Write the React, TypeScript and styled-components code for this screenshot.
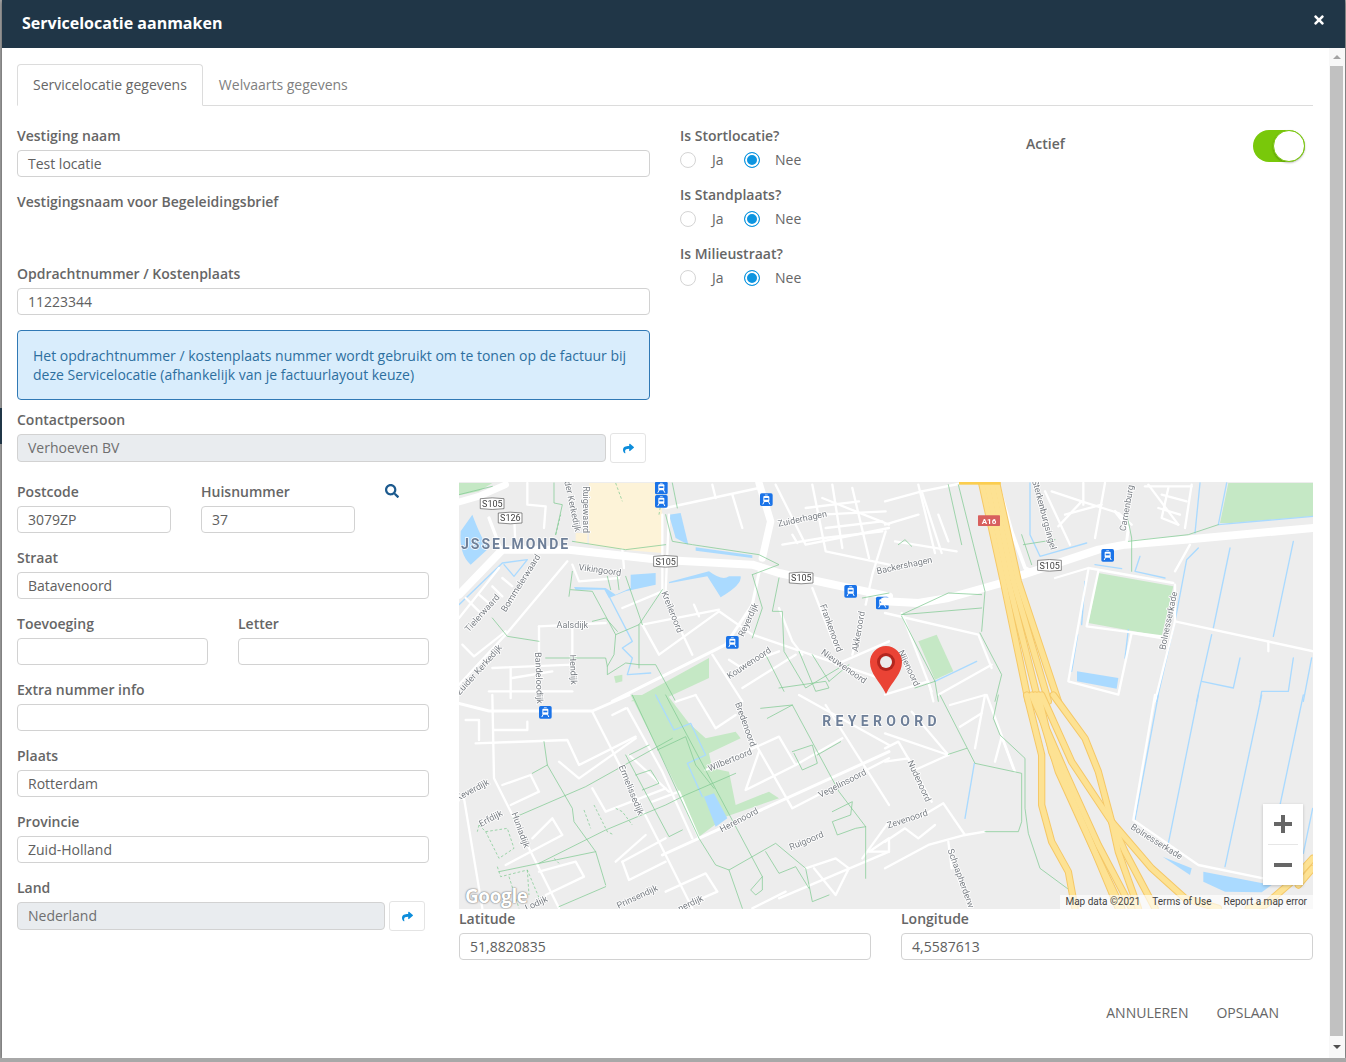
import React from "react";
import styled, { createGlobalStyle } from "styled-components";
import { FaTimes, FaShare, FaSearch } from "react-icons/fa";

const GlobalStyle = createGlobalStyle`
  html, body { margin: 0; padding: 0; background: #a8a8a8; overflow: hidden; }
  body { font-family: "Open Sans", "Liberation Sans", sans-serif; font-size: 14px; color: #666; }
  * { box-sizing: border-box; }
`;

const SideMark = styled.div`
  position: absolute;
  left: 0;
  top: 408px;
  width: 2px;
  height: 36px;
  background: #203647;
`;
const Modal = styled.div`
  width: 1343px;
  height: 1058px;
  margin-left: 2px;
  background: #fff;
  box-shadow: 0 1px 4px rgba(0, 0, 0, 0.55);
  display: flex;
  flex-direction: column;
`;
const Header = styled.div`
  height: 48px;
  flex: none;
  background: #203647;
  color: #fff;
  display: flex;
  align-items: flex-start;
  justify-content: space-between;
  padding: 12px 19px 0 20px;
`;
const Title = styled.div`
  font-size: 16px;
  font-weight: 700;
  line-height: 22px;
`;
const CloseBtn = styled.div`
  display: flex;
  margin-top: 1px;
  font-size: 14px;
  color: #fff;
`;
const Body = styled.div`
  flex: 1;
  display: flex;
  min-height: 0;
`;
const Content = styled.div`
  flex: 1;
  padding: 16px 16px 0 15px;
`;
const Scrollbar = styled.div`
  width: 16px;
  flex: none;
  padding-left: 1px;
  background: #f8f8f8;
  display: flex;
  flex-direction: column;
  align-items: flex-start;
`;
const ScrollArrow = styled.div<{ $down?: boolean }>`
  height: ${(p) => (p.$down ? 22 : 18)}px;
  width: 13px;
  flex: none;
  display: flex;
  align-items: center;
  justify-content: center;
  &::after {
    content: "";
    border-left: 4px solid transparent;
    border-right: 4px solid transparent;
    ${(p) => (p.$down ? "border-top: 4px solid #505050;" : "border-bottom: 4px solid #a3a3a3;")}
  }
`;
const ScrollThumb = styled.div`
  flex: 1;
  width: 13px;
  background: #c1c1c1;
`;

const TabList = styled.div`
  display: flex;
  height: 42px;
  border-bottom: 1px solid #dcdcdc;
  margin-bottom: 20px;
`;
const Tab = styled.div<{ $active?: boolean }>`
  height: 42px;
  padding: 0 15px;
  line-height: 39px;
  font-size: 14px;
  border: 1px solid ${(p) => (p.$active ? "#dcdcdc" : "transparent")};
  border-bottom: 1px solid ${(p) => (p.$active ? "#fff" : "transparent")};
  border-radius: 4px 4px 0 0;
  color: ${(p) => (p.$active ? "#666" : "#808080")};
  background: ${(p) => (p.$active ? "#fff" : "transparent")};
`;

const TopRow = styled.div`
  display: grid;
  grid-template-columns: 633px 376px 1fr;
`;
const LeftCol = styled.div`
  width: 633px;
`;
const Label = styled.div`
  font-size: 14px;
  font-weight: 600;
  line-height: 19px;
  margin-bottom: 5px;
  color: #666;
  white-space: nowrap;
`;
const Field = styled.div`
  margin-bottom: 15px;
  min-width: 0;
`;
const TextBox = styled.div<{ $disabled?: boolean }>`
  height: ${(p) => (p.$disabled ? 28 : 27)}px;
  line-height: 26px;
  padding: 0 10px;
  border: 1px solid #d2d2d2;
  border-radius: 4px;
  font-size: 14px;
  color: ${(p) => (p.$disabled ? "#6f6f6f" : "#606060")};
  background: ${(p) => (p.$disabled ? "#e9ecef" : "#fff")};
`;
const Spacer = styled.div`
  height: 48px;
`;
const Alert = styled.div`
  height: 70px;
  padding: 15px;
  border: 1px solid #3079b5;
  border-radius: 4px;
  background: #d9edfc;
  color: #2d6f9f;
  font-size: 14px;
  line-height: 19px;
  margin-bottom: 10px;
`;
const InputWithBtn = styled.div`
  display: flex;
  gap: 4px;
  align-items: center;
  height: 28px;
`;
const Grow = styled.div`
  flex: 1;
`;
const ShareBtn = styled.div`
  width: 36px;
  height: 30px;
  margin-right: 4px;
  flex: none;
  border: 1px solid #e4e4e4;
  border-radius: 3px;
  display: flex;
  align-items: center;
  justify-content: center;
  background: #fff;
  color: #0d8ddb;
  font-size: 11px;
`;

const RadioCol = styled.div`
  padding-left: 30px;
`;
const RadioGroup = styled.div`
  margin-bottom: 15px;
`;
const RadioRow = styled.div`
  display: flex;
  height: 20px;
  align-items: center;
`;
const RadioItem = styled.div<{ $w: number }>`
  width: ${(p) => p.$w}px;
  display: flex;
  align-items: center;
  line-height: 20px;
  color: #666;
`;
const RadioDot = styled.span<{ $on?: boolean }>`
  width: 16px;
  height: 16px;
  flex: none;
  border-radius: 50%;
  background: ${(p) => (p.$on ? "#0d95e0" : "#fff")};
  border: 1px solid ${(p) => (p.$on ? "#0d95e0" : "#d4d4d4")};
  box-shadow: ${(p) => (p.$on ? "inset 0 0 0 2px #fff" : "none")};
  margin-right: ${(p) => (p.$on ? 15 : 16)}px;
`;
const ActiveCol = styled.div`
  display: flex;
  justify-content: space-between;
  align-items: flex-start;
  padding: 4px 8px 0 0;
`;
const ActiveLabel = styled.div`
  font-size: 14px;
  font-weight: 600;
  line-height: 20px;
  margin-top: 4px;
  color: #666;
`;
const Toggle = styled.div`
  width: 52px;
  height: 32px;
  border-radius: 16px;
  background: #79c80a;
  display: flex;
  justify-content: flex-end;
`;
const ToggleKnob = styled.div`
  width: 32px;
  height: 32px;
  border-radius: 50%;
  background: #fff;
  border: 1px solid #79c80a;
  box-shadow: 0 1px 2px rgba(0, 0, 0, 0.25);
`;

const LowerRow = styled.div`
  display: grid;
  grid-template-columns: 412px 854px;
  column-gap: 30px;
  margin-top: 20px;
`;
const Cols = styled.div<{ $cols: string }>`
  display: grid;
  grid-template-columns: ${(p) => p.$cols};
  column-gap: 30px;
`;
const SearchIcon = styled.div`
  display: flex;
  color: #1c5a8e;
  font-size: 14px;
  margin-top: 2px;
`;
const MapBox = styled.div`
  position: relative;
  height: 427px;
  overflow: hidden;
  background: #ededed;
`;
const MapSvg = styled.svg`
  display: block;
  filter: blur(0.35px);
`;
const ZoomCtl = styled.div`
  position: absolute;
  right: 10px;
  top: 322px;
  width: 40px;
  height: 81px;
  background: #fff;
  box-shadow: 0 1px 3px rgba(0, 0, 0, 0.2);
  display: flex;
  flex-direction: column;
  align-items: center;
`;
const ZoomBtn = styled.div`
  height: 40px;
  width: 100%;
  display: flex;
  align-items: center;
  justify-content: center;
`;
const ZoomSep = styled.div`
  width: 30px;
  height: 1px;
  background: #e6e6e6;
`;
const Attribution = styled.div`
  position: absolute;
  right: 0;
  bottom: 0;
  height: 14px;
  display: flex;
  gap: 12px;
  padding: 0 6px 0 5px;
  background: rgba(255, 255, 255, 0.65);
  font-family: Roboto, "Liberation Sans", sans-serif;
  font-size: 10px;
  line-height: 14px;
  color: #444;
  white-space: nowrap;
`;
const GoogleMark = styled.div`
  position: absolute;
  left: 6px;
  bottom: 2px;
  font-family: "Open Sans", "Liberation Sans", sans-serif;
  font-size: 19px;
  font-weight: 700;
  line-height: 22px;
  letter-spacing: -0.4px;
  color: #fff;
  text-shadow: 0 0 2px #777, 0 0 1px #777;
`;
const Footer = styled.div`
  display: flex;
  justify-content: flex-end;
  gap: 28px;
  padding-right: 34px;
  margin-top: 28px;
`;
const TextBtn = styled.div`
  font-size: 14px;
  line-height: 20px;
  color: #666;
  text-transform: uppercase;
`;

type Label3 = [string, number, number, number];
type Quad = {
  dx: number;
  dy: number;
  parks?: string[];
  beige?: string[];
  waterFill?: string[];
  water?: string[];
  green?: string[];
  dashed?: string[];
  wide?: [string, number][];
  roads?: string[];
  highway?: string[];
  labels?: Label3[];
  shields?: [string, number, number][];
  transit?: [number, number][];
};

// path data is in zoomed-in (3x) map pixels, one block per map quarter
const quads: Quad[] = [
  {
    dx: 0,
    dy: -0.67,
    parks: ["M0,5 L100,5 L60,30 L0,42Z", "M515,660 L750,530 L750,590 L600,660Z", "M465,585 L490,580 L490,600 L470,605Z"],
    beige: ["M390,5 L600,5 L610,100 L610,215 L490,205 L390,190Z", "M350,155 L385,155 L385,185 L350,185Z"],
    waterFill: [
      "M40,100 Q70,180 90,200 L35,250 Q0,220 5,150Z",
      "M630,100 L665,95 L688,190 L650,170Z",
      "M710,198 L880,222 L880,230 L710,208Z",
      "M515,280 L590,275 L590,310 L500,330 L450,350 L436,325 L350,325 L345,317 L440,320 L470,340 L515,320Z",
      "M630,302 L750,270 Q790,300 810,285 L845,285 Q850,310 785,348 L745,285 L630,306Z",
    ],
    water: ["M445,335 L520,480 L490,500 L520,530 L505,580 L575,575", "M0,370 L130,245 L205,235 L165,285 L135,250"],
    green: [
      "M285,5 L285,65 L310,70 L290,160",
      "M0,40 L100,15",
      "M340,180 L500,205 L620,190",
      "M640,5 L655,80",
      "M620,100 L640,180 L700,190 L900,220 L960,250 L880,280",
      "M340,270 L330,345",
      "M335,325 L400,330 L470,460 L540,430 L610,325",
      "M445,285 L455,325",
      "M475,285 L480,325",
      "M500,285 L550,430",
      "M470,460 L465,520 L445,555 L445,580 L500,545 L540,550 L590,550 L650,660",
      "M400,420 L440,410 L475,450",
      "M540,430 L540,560",
      "M100,410 L145,465 L240,480",
      "M880,280 L910,380 L880,470",
      "M960,290 L940,390 L970,390 L975,510 L1040,620 L1140,560",
      "M1020,510 L1070,630 L1110,620 L1100,600 L960,620",
      "M920,520 L975,630",
      "M1110,600 L1170,550",
      "M1060,520 L1110,600",
      "M1210,350 L1290,335",
      "M260,530 L440,530 L445,555",
    ],
    dashed: ["M290,160 L305,100", "M470,5 L490,60", "M600,100 L610,40"],
    roads: [
      "M205,5 L205,70 L260,75 L255,140",
      "M165,100 L170,200",
      "M325,240 L140,460 L0,610",
      "M0,410 L120,260",
      "M20,350 L60,390",
      "M60,340 L95,370",
      "M100,315 L130,345",
      "M130,290 L160,315",
      "M10,490 L45,525 L140,450",
      "M490,205 L495,260",
      "M610,100 L610,330",
      "M630,100 L620,330",
      "M490,380 L610,330",
      "M610,330 L700,520",
      "M550,430 L600,520 L780,390 L880,460 L1290,600",
      "M550,430 L780,385",
      "M705,370 L720,405",
      "M240,435 L440,425",
      "M240,435 L240,650",
      "M340,440 L340,600",
      "M100,560 L340,550",
      "M155,560 L155,650",
      "M160,590 L280,570",
      "M90,630 L340,630",
      "M760,520 L850,660",
      "M810,535 L840,555 L960,510",
      "M850,620 L1010,520",
      "M960,380 L1000,480 L1030,520",
      "M1060,320 L1130,500",
      "M1210,400 L1180,520",
      "M950,10 L1000,110 L1040,190 L1290,140",
      "M1060,10 L1100,210 L1290,250",
      "M1120,10 L1150,200",
      "M1280,150 L1240,280 L1220,370",
      "M970,190 L1090,170",
      "M620,80 L900,20",
      "M760,10 L770,50",
      "M820,40 L850,140",
      "M340,250 L360,300 L480,290",
      "M1090,50 L1290,130",
      "M1040,80 L1200,60",
      "M1100,140 L1270,120",
      "M1180,20 L1230,230",
      "M1095,170 L1270,150",
      "M1000,160 L1015,185",
      "M1085,100 L1280,90",
      "M1130,550 L1290,480",
      "M1280,380 L1290,350",
    ],
    wide: [
      ["M0,340 L130,205 L330,205 L600,235 L880,250 L960,275 L1290,345", 24],
      ["M0,62 L60,45 L140,10", 20],
      ["M900,5 L935,120 L910,230", 22],
      ["M130,215 L90,110", 10],
      ["M905,250 L880,370 L800,490 L460,660", 9],
    ],
    labels: [
      ["rder Kerkedijk", 340, 70, 78],
      ["Ruigewaard", 382, 85, 90],
      ["Zuiderhagen", 1030, 112, -12],
      ["Vikingoord", 423, 266, 8],
      ["Kreileroord", 640, 392, 68],
      ["Reyerdijk", 868, 415, -65],
      ["Frankenoord", 1117, 440, 70],
      ["Akkeroord", 1198, 450, -80],
      ["Nieuwenoord", 1155, 555, 35],
      ["Kouwenoord", 870, 545, -33],
      ["Aalsdijk", 340, 430, 0],
      ["Bandeloodijk", 240, 590, 88],
      ["Hendijk", 343, 565, 88],
      ["Tielerwaard", 70, 395, -48],
      ["Bommelerwaard", 185, 305, -58],
      ["Zuider Kerkedijk", 60, 565, -48],
    ],
    shields: [["S105", 100, 67], ["S126", 154, 110], ["S105", 620, 240], ["S105", 1027, 290]],
    transit: [[607, 20], [607, 60], [922, 55], [1175, 330], [1270, 365], [820, 483]],
  },
  {
    dx: 426,
    dy: -0.67,
    parks: ["M1030,5 L1285,5 L1285,105 L1040,125 L1005,125Z", "M640,275 L865,315 L830,465 L610,425Z", "M100,480 L155,460 L205,570 L150,595Z"],
    waterFill: ["M576,570 L700,590 L695,622 L576,600Z"],
    water: [
      "M1035,200 L985,440",
      "M1225,180 L1165,465",
      "M980,460 L935,660",
      "M1065,530 L1045,620 L950,600",
      "M1225,530 L1210,630 L1130,630 L1125,660",
      "M1280,530 L1255,660",
      "M945,5 L930,155",
      "M1025,5 L1000,130 L1285,105",
      "M940,200 L905,235 L870,420 L815,660",
      "M435,5 L435,160 L465,225 L605,185",
      "M630,250 L710,262",
      "M765,225 L750,270 L840,290",
      "M600,300 L590,430",
      "M578,460 L560,570",
      "M730,445 L720,530",
      "M275,540 L150,600",
    ],
    green: [
      "M190,10 L230,190",
      "M220,10 L300,330 L290,450",
      "M290,340 L190,335 L50,400",
      "M290,380 L50,400",
      "M50,405 L150,600 L160,660",
      "M285,455 L350,580 L330,660",
      "M150,600 L90,620",
      "M410,160 L440,250",
      "M415,190 L510,175",
      "M1000,130 L910,160 L730,180",
      "M725,95 L740,170 L740,270",
      "M40,190 L60,175 L80,195",
    ],
    roads: [
      "M0,130 L100,100",
      "M100,10 L150,215",
      "M0,60 L110,30 L220,8",
      "M480,30 L555,190",
      "M520,135 L590,60 L700,95 L740,130",
      "M595,5 L595,70",
      "M660,5 L630,170",
      "M540,100 L650,70",
      "M510,290 L610,260 L865,305",
      "M610,265 L550,600 L700,640 L740,455 L830,470",
      "M640,270 L605,435 L830,465",
      "M870,310 L870,420 L810,660",
      "M915,190 L870,270",
      "M870,420 L1285,510",
      "M1150,480 L1150,510",
      "M0,395 L280,460 L320,560",
      "M50,395 L140,630",
      "M0,640 L130,600 L145,660",
      "M160,640 L320,550",
      "M850,20 L830,110 L880,130",
      "M160,100 L190,180",
      "M30,180 L215,210",
      "M500,30 L590,60",
      "M790,10 L880,130",
      "M830,40 L905,60",
      "M820,80 L885,100",
      "M780,15 L920,15",
      "M920,10 L900,140",
      "M110,30 L170,215",
    ],
    wide: [
      ["M0,360 L100,365 L190,350 L350,305 L385,290 L640,205 L720,190 L900,175 L1285,140", 24],
      ["M340,10 L380,150 L420,260 L440,270", 11],
      ["M690,90 L730,140 L725,180", 9],
    ],
    highway: [
      "M290,5 L355,300 L430,660",
      "M305,5 L370,300 L460,660",
      "M320,5 L385,300 L490,660",
      "M335,5 L400,300 L520,660",
    ],
    labels: [
      ["Sterkenburgsingel", 478, 100, 75],
      ["Carnenburg", 725, 80, -80],
      ["Backershagen", 58, 252, -12],
      ["Nijenoord", 72, 560, 65],
      ["Bolnesserkade", 850, 418, -78],
    ],
    shields: [["S105", 494, 252]],
    transit: [[668, 222]],
  },
  {
    dx: 0,
    dy: 213,
    parks: [
      "M515,0 L625,0 L690,85 L740,130 L830,110 L845,130 L750,175 L760,220 L810,230 L830,330 L930,290 L960,310 L800,365 L720,425 L660,290 L600,170Z",
    ],
    waterFill: ["M735,305 L765,295 L805,370 L770,395Z"],
    water: ["M590,0 L645,105 L695,85 L740,180 L685,205 L730,305"],
    green: [
      "M255,140 L265,210 L340,340 L345,380 L410,470 L440,570",
      "M220,235 L265,210",
      "M160,370 L380,275 L640,130",
      "M240,505 L440,405 L620,330 L680,300 L830,235",
      "M120,530 L410,470",
      "M300,635 L440,575",
      "M500,180 L590,350 L630,425 L670,405",
      "M620,0 L910,545 L875,585 L890,600 L910,585 L910,545",
      "M520,0 L600,170 L720,430 L770,510 L810,525 L950,445 L1040,520 L1060,620 L1110,600",
      "M810,525 L850,640",
      "M595,165 L680,125 L710,210 L765,280",
      "M905,40 L1000,30 L1140,290 L1220,395 L1220,550",
      "M1000,170 L1060,150 L1075,205 L1030,225 L1005,175",
      "M1075,180 L1145,140",
      "M1120,350 L1180,320 L1175,360 L1120,380 L1135,420 L1190,400 L1220,395",
      "M920,470 L960,535 L1010,515 L1050,580",
      "M925,70 L1000,30",
      "M510,180 L570,150",
      "M530,240 L575,225 L600,265 L550,285",
    ],
    dashed: [
      "M60,390 L80,410 L145,400 L165,460 L120,490 L80,410",
      "M60,390 L55,410",
      "M115,515 L125,545 L205,525 L245,620",
      "M150,545 L180,640",
      "M205,525 L210,600",
      "M375,345 L395,400",
      "M405,330 L445,410 L465,420",
      "M470,340 L490,350 L520,390",
      "M285,490 L300,505",
    ],
    roads: [
      "M100,0 L105,250 L150,340 L300,640",
      "M400,50 L620,480 L700,640",
      "M505,40 L610,230 L700,430",
      "M50,145 L325,135 L360,210 L530,125",
      "M130,270 L215,240 L240,290 L155,330",
      "M220,430 L280,370 L310,420 L140,510",
      "M500,40 L460,60",
      "M710,0 L770,100 L830,60",
      "M650,20 L710,0",
      "M900,170 L860,285 L1010,210 L960,125 L740,225",
      "M880,130 L1000,340 L1290,190",
      "M1100,30 L1290,330",
      "M1150,130 L1010,210",
      "M240,530 L350,500 L375,545 L260,600",
      "M490,500 L620,430",
      "M490,500 L510,555 L620,500",
      "M620,590 L740,535 L775,590 L660,640",
      "M1210,490 L1290,380",
      "M1040,520 L1130,490 L1170,520 L1130,600 L1065,520",
      "M960,610 L1290,470",
      "M880,640 L980,590",
      "M15,310 L70,640",
      "M400,280 L440,350 L620,280",
      "M300,200 L360,250 L530,130",
      "M20,75 L60,75 L60,135",
      "M205,80 L205,105 L105,105",
      "M510,180 L630,290",
      "M580,320 L660,290 L720,430",
      "M1020,0 L1290,150",
      "M470,500 L560,420",
      "M1230,470 L1290,430 L1290,470 L1230,470",
    ],
    wide: [
      ["M0,25 L90,48 L400,48 L510,0", 9],
      ["M610,480 L1290,170", 9],
    ],
    labels: [
      ["Keverdijk", 40, 285, -28],
      ["Erfdijk", 95, 370, -28],
      ["Huniadijk", 185, 405, 70],
      ["Ermelissedijk", 517, 285, 68],
      ["Bredenoord", 860, 88, 70],
      ["Wilbertoord", 813, 195, -22],
      ["Herenoord", 840, 375, -28],
      ["Vegelinsoord", 1150, 265, -27],
      ["Ruigoord", 1042, 437, -22],
      ["Prinsendijk", 535, 605, -25],
      ["Lodijk", 232, 625, -25],
      ["nerdijk", 695, 625, -25],
    ],
    transit: [[259, 52]],
  },
  {
    dx: 426,
    dy: 213,
    waterFill: ["M833,485 L920,520 L915,540Z", "M955,530 L1160,570 L1130,592 L1020,590 L955,560Z"],
    water: ["M820,0 L750,375", "M940,0 L850,445", "M1130,0 L1020,515", "M1255,0 L1185,330", "M1283,340 L1255,475", "M268,205 L240,370"],
    green: [
      "M165,0 L270,205 L410,235 L410,380 L400,410 L300,410",
      "M340,0 L325,70 L345,120 L420,190 L420,340 L430,415 L465,520 L560,590",
      "M190,178 L245,160",
    ],
    roads: [
      "M810,0 L745,375 L940,510 L1135,550",
      "M0,520 L130,450 L240,420 L300,410",
      "M240,420 L175,325 L100,370",
      "M190,180 L90,225 L40,140 L0,160",
      "M0,115 L190,180",
      "M80,50 L190,180",
      "M225,95 L290,55",
      "M300,0 L270,160",
      "M305,0 L390,230",
      "M330,200 L350,125 L385,220",
      "M190,440 L200,520",
      "M0,200 L70,190 L140,320",
      "M0,440 L60,400 L100,430 L150,390",
      "M195,30 L300,0",
    ],
    highway: [
      "M425,0 L470,180 L470,330 L500,440 L550,530 L570,640",
      "M440,0 L540,230 L640,450 L740,640",
      "M470,0 L560,200 L680,380 L800,520 L900,610 L1000,640",
      "M505,0 L600,130 L640,230 L680,380 L700,470 L760,640",
      "M460,0 L500,170 L600,400 L700,640",
      "M450,0 L520,230 L620,450 L710,640",
      "M680,380 L720,470 L810,640",
      "M1283,490 L1220,560 L1140,630 L1090,640",
      "M1283,520 L1240,570",
    ],
    labels: [
      ["Nudenoord", 103, 258, 65],
      ["Zevenoord", 67, 372, -18],
      ["Schaapherderw", 228, 550, 70],
      ["Bolnesserkade", 815, 440, 32],
    ],
  },
];

const MapLabel = styled.text`
  font-family: Roboto, "Liberation Sans", sans-serif;
  font-size: 27px;
  fill: #7a7f85;
  stroke: #fff;
  stroke-width: 5px;
  paint-order: stroke;
  text-anchor: middle;
`;
const AreaLabel = styled.text`
  font-family: Roboto, "Liberation Sans", sans-serif;
  font-size: 42px;
  font-weight: 700;
  fill: #6e7f98;
  stroke: #fff;
  stroke-width: 4px;
  paint-order: stroke;
`;
const ShieldText = styled.text`
  font-family: Roboto, "Liberation Sans", sans-serif;
  font-size: 27px;
  fill: #444;
  text-anchor: middle;
`;
const RouteText = styled.text`
  font-family: Roboto, "Liberation Sans", sans-serif;
  font-size: 24px;
  font-weight: 700;
  fill: #fff;
  text-anchor: middle;
`;

function Transit({ x, y }: { x: number; y: number }) {
  return (
    <g transform={`translate(${x},${y})`}>
      <rect x={-19} y={-19} width={38} height={38} rx={5} fill="#1a73e8" />
      <rect x={-9} y={-11} width={18} height={18} rx={3} fill="#fff" />
      <rect x={-6} y={-5} width={12} height={5} fill="#1a73e8" />
      <path d="M-7,7 L-10,13 M7,7 L10,13" stroke="#fff" strokeWidth={3} />
      <path d="M-3,-14 H3" stroke="#fff" strokeWidth={2} />
    </g>
  );
}

function Shield({ text, x, y }: { text: string; x: number; y: number }) {
  return (
    <g transform={`translate(${x},${y})`}>
      <path d="M-35,-15 Q0,-20 35,-15 V15 Q0,20 -35,15 Z" fill="#fff" stroke="#555" strokeWidth={2} />
      <ShieldText y={10}>{text}</ShieldText>
    </g>
  );
}

function QuadLayer({ q }: { q: Quad }) {
  return (
    <g transform={`translate(${q.dx},${q.dy}) scale(0.33333)`} fill="none" strokeLinejoin="round" strokeLinecap="round">
      {q.parks?.map((d, i) => <path key={i} d={d} fill="#c5e8c5" />)}
      {q.beige?.map((d, i) => <path key={i} d={d} fill="#fdf3d8" />)}
      {q.waterFill?.map((d, i) => <path key={i} d={d} fill="#aadaff" />)}
      {q.water?.map((d, i) => <path key={i} d={d} stroke="#aadaff" strokeWidth={4} />)}
      {q.roads?.map((d, i) => <path key={i} d={d} stroke="#fff" strokeWidth={7} />)}
      {q.wide?.map(([d, w], i) => <path key={i} d={d} stroke="#fff" strokeWidth={w} />)}
      {q.green?.map((d, i) => <path key={i} d={d} stroke="#7fca92" strokeWidth={2.2} />)}
      {q.dashed?.map((d, i) => <path key={i} d={d} stroke="#7fca92" strokeWidth={2.2} strokeDasharray="8 6" strokeLinecap="butt" />)}
      {q.highway?.map((d, i) => <path key={i} d={d} stroke="#f5c867" strokeWidth={22} />)}
      {q.highway?.map((d, i) => <path key={i} d={d} stroke="#fde293" strokeWidth={16} />)}
      {q.labels?.map(([t, x, y, a], i) => (
        <MapLabel key={i} x={x} y={y + 9} transform={`rotate(${a} ${x} ${y})`}>{t}</MapLabel>
      ))}
      {q.shields?.map(([t, x, y], i) => <Shield key={i} text={t} x={x} y={y} />)}
      {q.transit?.map(([x, y], i) => <Transit key={i} x={x} y={y} />)}
    </g>
  );
}

function MapDrawing() {
  return (
    <MapSvg width={854} height={427} viewBox="0 0 854 427">
      <rect width={854} height={427} fill="#ededed" />
      {quads.map((q, i) => <QuadLayer key={i} q={q} />)}
      <g transform="translate(0,-0.67) scale(0.33333)">
        <AreaLabel x={6} y={204} letterSpacing={6}>JSSELMONDE</AreaLabel>
      </g>
      <g transform="translate(426,-0.67) scale(0.33333)">
        <rect x={279} y={102} width={66} height={32} rx={2} fill="#d8605e" />
        <RouteText x={312} y={127}>A16</RouteText>
        <rect x={222} y={0} width={125} height={10} fill="#fbcd4f" />
      </g>
      <g transform="translate(0,213) scale(0.33333)">
        <AreaLabel x={1090} y={93} letterSpacing={13}>REYEROORD</AreaLabel>
      </g>
      <path d="M427,212 C420,198 411,192 411,180 A16,16 0 0 1 443,180 C443,192 434,198 427,212 Z" fill="#ea4335" />
      <circle cx={427} cy={180} r={9} fill="#b3261e" />
      <circle cx={427} cy={180} r={6} fill="#ececec" />
    </MapSvg>
  );
}

function YesNo({ title }: { title: string }) {
  return (
    <RadioGroup>
      <Label>{title}</Label>
      <RadioRow>
        <RadioItem $w={64}><RadioDot />Ja</RadioItem>
        <RadioItem $w={80}><RadioDot $on />Nee</RadioItem>
      </RadioRow>
    </RadioGroup>
  );
}

function TextField({ label, value, disabled }: { label: string; value?: string; disabled?: boolean }) {
  return (
    <Field>
      <Label>{label}</Label>
      <TextBox $disabled={disabled}>{value}</TextBox>
    </Field>
  );
}

export default function App() {
  return (
    <>
      <GlobalStyle />
      <SideMark />
      <Modal>
        <Header>
          <Title>Servicelocatie aanmaken</Title>
          <CloseBtn><FaTimes /></CloseBtn>
        </Header>
        <Body>
          <Content>
            <TabList>
              <Tab $active>Servicelocatie gegevens</Tab>
              <Tab>Welvaarts gegevens</Tab>
            </TabList>

            <TopRow>
              <LeftCol>
                <TextField label="Vestiging naam" value="Test locatie" />
                <Label>Vestigingsnaam voor Begeleidingsbrief</Label>
                <Spacer />
                <TextField label="Opdrachtnummer / Kostenplaats" value="11223344" />
                <Alert>
                  Het opdrachtnummer / kostenplaats nummer wordt gebruikt om te tonen op de factuur bij
                  deze Servicelocatie (afhankelijk van je factuurlayout keuze)
                </Alert>
                <Label>Contactpersoon</Label>
                <InputWithBtn>
                  <Grow><TextBox $disabled>Verhoeven BV</TextBox></Grow>
                  <ShareBtn><FaShare /></ShareBtn>
                </InputWithBtn>
              </LeftCol>
              <RadioCol>
                <YesNo title="Is Stortlocatie?" />
                <YesNo title="Is Standplaats?" />
                <YesNo title="Is Milieustraat?" />
              </RadioCol>
              <ActiveCol>
                <ActiveLabel>Actief</ActiveLabel>
                <Toggle><ToggleKnob /></Toggle>
              </ActiveCol>
            </TopRow>

            <LowerRow>
              <div>
                <Cols $cols="154px 154px 1fr">
                  <TextField label="Postcode" value="3079ZP" />
                  <TextField label="Huisnummer" value="37" />
                  <SearchIcon><FaSearch /></SearchIcon>
                </Cols>
                <TextField label="Straat" value="Batavenoord" />
                <Cols $cols="191px 191px">
                  <TextField label="Toevoeging" />
                  <TextField label="Letter" />
                </Cols>
                <TextField label="Extra nummer info" />
                <TextField label="Plaats" value="Rotterdam" />
                <TextField label="Provincie" value="Zuid-Holland" />
                <Label>Land</Label>
                <InputWithBtn>
                  <Grow><TextBox $disabled>Nederland</TextBox></Grow>
                  <ShareBtn><FaShare /></ShareBtn>
                </InputWithBtn>
              </div>
              <div>
                <MapBox>
                  <MapDrawing />
                  <GoogleMark>Google</GoogleMark>
                  <Attribution>
                    <span>Map data ©2021</span>
                    <span>Terms of Use</span>
                    <span>Report a map error</span>
                  </Attribution>
                  <ZoomCtl>
                    <ZoomBtn>
                      <svg width="18" height="18" viewBox="0 0 18 18"><path d="M0 7h7V0h4v7h7v4h-7v7H7v-7H0z" fill="#666" /></svg>
                    </ZoomBtn>
                    <ZoomSep />
                    <ZoomBtn>
                      <svg width="18" height="4" viewBox="0 0 18 4"><path d="M0 0h18v4H0z" fill="#666" /></svg>
                    </ZoomBtn>
                  </ZoomCtl>
                </MapBox>
                <Cols $cols="412px 412px">
                  <TextField label="Latitude" value="51,8820835" />
                  <TextField label="Longitude" value="4,5587613" />
                </Cols>
              </div>
            </LowerRow>

            <Footer>
              <TextBtn>Annuleren</TextBtn>
              <TextBtn>Opslaan</TextBtn>
            </Footer>
          </Content>
          <Scrollbar>
            <ScrollArrow />
            <ScrollThumb />
            <ScrollArrow $down />
          </Scrollbar>
        </Body>
      </Modal>
    </>
  );
}
